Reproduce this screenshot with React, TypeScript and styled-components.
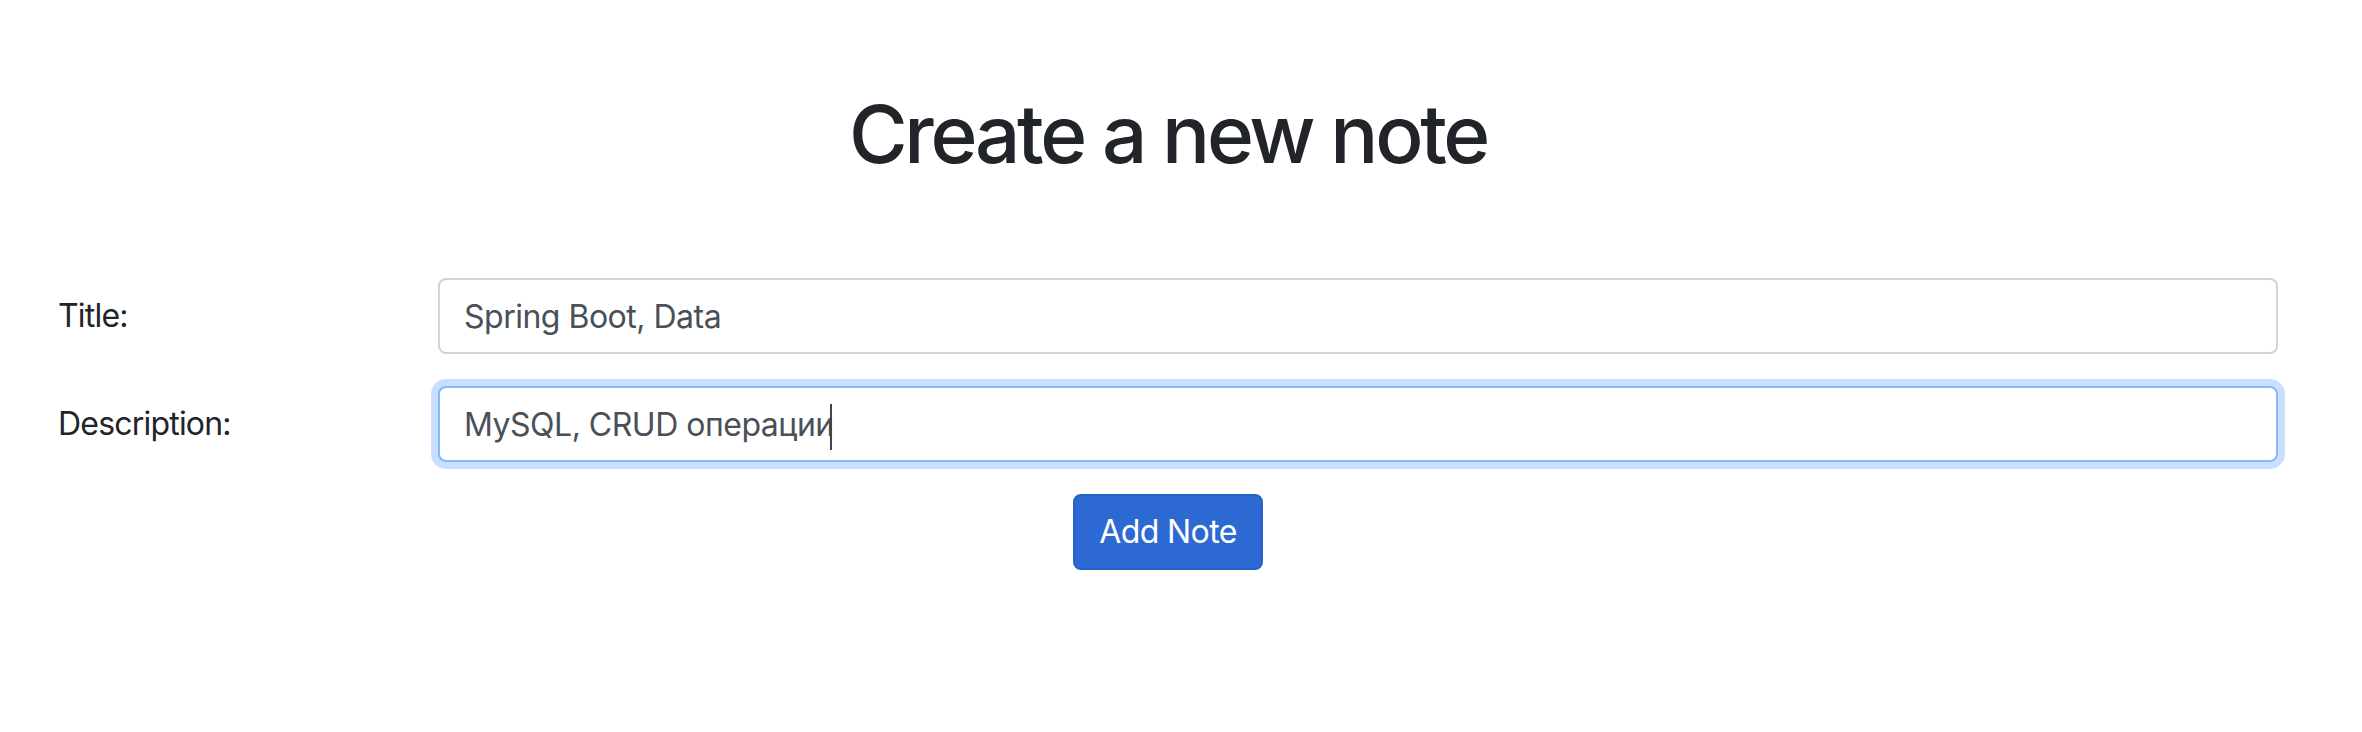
import React from "react";
import styled, { createGlobalStyle, css } from "styled-components";

const GlobalStyle = createGlobalStyle`
  body {
    margin: 0;
    background: #fff;
    font-family: Inter, "Liberation Sans", sans-serif;
    color: #212529;
  }
  * {
    box-sizing: border-box;
  }
`;

function App() {
  return (
    <Page>
      <GlobalStyle />
      <Container>
        <Heading>Create a new note</Heading>
        <Form onSubmit={(e) => e.preventDefault()}>
          <FormRow>
            <Label htmlFor="title">Title:</Label>
            <Field>
              <Input id="title" defaultValue="Spring Boot, Data" />
            </Field>
          </FormRow>
          <FormRow>
            <Label htmlFor="description">Description:</Label>
            <Field>
              <Input
                id="description"
                $active
                defaultValue="MySQL, CRUD операции"
              />
              {/* text caret, the field is focused in the screenshot */}
              <Caret />
            </Field>
          </FormRow>
          <Actions>
            <Button type="submit">Add Note</Button>
          </Actions>
        </Form>
      </Container>
    </Page>
  );
}

const Page = styled.div`
  width: 2336px;
`;

const Container = styled.div`
  max-width: 2280px;
  margin: 0 auto;
  padding: 86px 30px 0;
`;

const Heading = styled.h1`
  margin: 0;
  text-align: center;
  font-size: 80px;
  font-weight: 500;
  line-height: 1.2;
  letter-spacing: -3.3px;
  color: #212529;
`;

const Form = styled.form`
  margin-top: 96px;
`;

const FormRow = styled.div`
  display: grid;
  grid-template-columns: 320px 1fr;
  column-gap: 60px;
  margin-bottom: 32px;
`;

const Label = styled.label`
  padding-top: 14px;
  font-size: 32px;
  line-height: 48px;
  letter-spacing: -0.8px;
  color: #212529;
`;

const Field = styled.div`
  position: relative;
`;

const Input = styled.input<{ $active?: boolean }>`
  display: block;
  width: 100%;
  height: 76px;
  padding: 12px 24px;
  font-family: inherit;
  font-size: 32px;
  line-height: 48px;
  letter-spacing: -0.5px;
  color: #495057;
  caret-color: #495057;
  background: #fff;
  border: 2px solid #ced4da;
  border-radius: 8px;
  outline: none;

  ${(p) =>
    p.$active &&
    css`
      border-color: #86b7fe;
      box-shadow: 0 0 0 7px rgba(13, 110, 253, 0.22);
    `}
`;

const Caret = styled.span`
  position: absolute;
  left: 392px;
  top: 18px;
  width: 2px;
  height: 46px;
  background: #3f454b;
  pointer-events: none;
`;

const Actions = styled.div`
  display: flex;
  justify-content: center;
`;

const Button = styled.button`
  padding: 12px 24px;
  font-family: inherit;
  font-size: 32px;
  line-height: 48px;
  letter-spacing: -0.6px;
  color: #fff;
  background: #2d69d2;
  border: 2px solid #2962c6;
  border-radius: 8px;
  cursor: pointer;
`;

export default App;
